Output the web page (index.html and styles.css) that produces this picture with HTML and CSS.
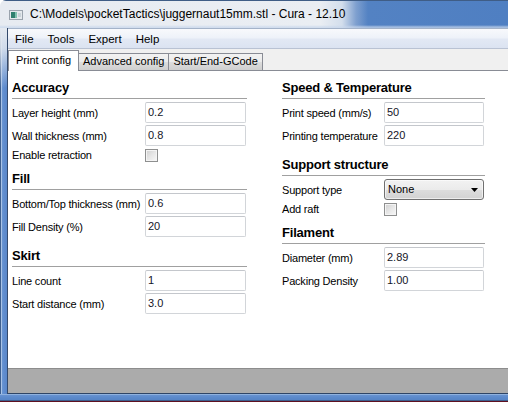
FILE: index.html
```html
<!DOCTYPE html>
<html>
<head>
<meta charset="utf-8">
<title>Cura</title>
<link rel="stylesheet" href="styles.css">
</head>
<body>
<div class="window">
  <div class="titlebar">
    <svg class="appicon" width="14" height="10" viewBox="0 0 14 10">
      <rect x="0.5" y="0.5" width="13" height="9" fill="#e4e8ec" stroke="#9aa3ad"/>
      <rect x="2" y="2" width="4" height="6" fill="#2f7f6e"/>
      <rect x="6" y="2" width="2" height="6" fill="#7fc0ad"/>
      <rect x="9" y="3" width="3" height="4" fill="#c9d2d8"/>
    </svg>
    <span class="title">C:\Models\pocketTactics\juggernaut15mm.stl - Cura - 12.10</span>
  </div>
  <div class="middle">
    <div class="lframe"></div>
    <div class="client">
      <div class="menubar">
        <span class="menu">File</span>
        <span class="menu">Tools</span>
        <span class="menu">Expert</span>
        <span class="menu">Help</span>
      </div>
      <div class="tabs">
        <div class="tab active">Print config</div>
        <div class="tab">Advanced config</div>
        <div class="tab">Start/End-GCode</div>
      </div>
      <div class="panel">
        <div class="col left">
          <div class="heading">Accuracy</div>
          <div class="row"><span class="label">Layer height (mm)</span><span class="input">0.2</span></div>
          <div class="row"><span class="label">Wall thickness (mm)</span><span class="input">0.8</span></div>
          <div class="row check"><span class="label">Enable retraction</span><span class="checkbox"></span></div>

          <div class="heading">Fill</div>
          <div class="row"><span class="label">Bottom/Top thickness (mm)</span><span class="input">0.6</span></div>
          <div class="row"><span class="label">Fill Density (%)</span><span class="input">20</span></div>

          <div class="heading">Skirt</div>
          <div class="row"><span class="label">Line count</span><span class="input">1</span></div>
          <div class="row"><span class="label">Start distance (mm)</span><span class="input">3.0</span></div>
        </div>
        <div class="col right">
          <div class="heading">Speed &amp; Temperature</div>
          <div class="row"><span class="label">Print speed (mm/s)</span><span class="input">50</span></div>
          <div class="row"><span class="label">Printing temperature</span><span class="input">220</span></div>

          <div class="heading">Support structure</div>
          <div class="row"><span class="label">Support type</span>
            <span class="select"><span>None</span>
              <svg class="arrow" width="7" height="4" viewBox="0 0 7 4"><path d="M0 0H7L3.5 4Z" fill="#000"/></svg>
            </span>
          </div>
          <div class="row check"><span class="label">Add raft</span><span class="checkbox"></span></div>

          <div class="heading">Filament</div>
          <div class="row"><span class="label">Diameter (mm)</span><span class="input">2.89</span></div>
          <div class="row"><span class="label">Packing Density</span><span class="input">1.00</span></div>
        </div>
      </div>
      <div class="status"></div>
    </div>
  </div>
  <div class="bframe"></div>
  <div class="desk"></div>
</div>
</body>
</html>
```

FILE: styles.css
```css
* { box-sizing: border-box; }
html, body { margin: 0; padding: 0; background: #ffffff; }
body {
  font-family: "Liberation Sans", Arial, sans-serif;
  font-size: 11px;
  color: #000;
}
.window {
  width: 508px;
  height: 402px;
  display: flex;
  flex-direction: column;
  overflow: hidden;
  border-top-left-radius: 6px;
}
.titlebar {
  height: 28px;
  flex: none;
  display: flex;
  align-items: center;
  padding-left: 9px;
  border-top: 1px solid #3f5d86;
  background:
    linear-gradient(180deg, rgba(255,255,255,0) 0, rgba(255,255,255,0) 24px, rgba(200,215,236,0.7) 26px, rgba(200,215,236,0.7) 27px),
    linear-gradient(90deg, #e7ebf1 0, #eaeef3 320px, #d3deec 342px, #7fa0cf 356px, #5382c3 368px, #4f7fc2 100%);
}
.appicon { flex: none; }
.title {
  margin-left: 7px;
  font-size: 12px;
  line-height: 15px;
  color: #000;
  white-space: nowrap;
}
.middle {
  flex: 1;
  display: flex;
  min-height: 0;
}
.lframe {
  width: 7px;
  flex: none;
  background:
    linear-gradient(180deg, rgba(228,233,240,1) 0, rgba(228,233,240,0.85) 20px, rgba(228,233,240,0) 60px),
    linear-gradient(90deg, #3d5f8f 0, #3d5f8f 1px, #a9c3e6 1px, #a9c3e6 2px, #6b97d3 2px, #5f8cce 4px, #5987ca 7px);
}
.client {
  flex: 1;
  display: flex;
  flex-direction: column;
  border-left: 1px solid #33496b;
  border-bottom: 1px solid #2f4566;
  min-width: 0;
}
.menubar {
  height: 21px;
  flex: none;
  display: flex;
  border-top: 1px solid #a4b3c9;
  border-bottom: 1px solid #b9c2d3;
  background: linear-gradient(180deg, #f8f9fc 0, #eef2f9 45%, #e2e8f4 55%, #dbe3f1 100%);
  padding-top: 2px;
}
.menu {
  padding: 0 7px;
  font-size: 11.5px;
  line-height: 16px;
}
.tabs {
  height: 22px;
  flex: none;
  display: flex;
  align-items: flex-end;
  background: #f0f0f0;
  border-bottom: 1px solid #898c95;
}
.tab {
  height: 17px;
  padding: 0 4px;
  margin-left: -1px;
  border: 1px solid #898c95;
  border-bottom: none;
  background: linear-gradient(180deg, #f2f2f2 0, #ebebeb 50%, #dddddd 51%, #cfcfcf 100%);
  line-height: 15px;
  white-space: nowrap;
}
.tab.active {
  position: relative;
  z-index: 1;
  height: 21px;
  margin-left: 0;
  margin-bottom: -1px;
  padding: 0 7px;
  background: #ffffff;
  line-height: 18px;
}
.panel {
  flex: 1;
  background: #ffffff;
  display: flex;
  padding-left: 4px;
  min-height: 0;
}
.col { flex: none; display: flex; flex-direction: column; }
.col.left { width: 235px; }
.col.right { width: 203px; margin-left: 35px; }
.heading {
  margin-top: 9px;
  margin-bottom: 3px;
  height: 19px;
  padding-bottom: 2px;
  line-height: 16px;
  font-size: 13px;
  font-weight: bold;
  letter-spacing: -0.2px;
  border-bottom: 1px solid #a0a0a0;
  white-space: nowrap;
}
.row {
  height: 21px;
  margin-bottom: 2px;
  display: flex;
  align-items: center;
}
.row.check { height: 14px; margin-bottom: 0; align-items: flex-start; }
.label {
  flex: none;
  white-space: nowrap;
  letter-spacing: -0.2px;
  padding-top: 1px;
}
.left .label { width: 133px; }
.right .label { width: 102px; }
.row.check .label { padding-top: 0; line-height: 14px; }
.input {
  width: 101px;
  height: 21px;
  flex: none;
  border: 1px solid #d2d5d9;
  border-top-color: #c4c7cc;
  border-radius: 2px;
  padding-left: 2px;
  line-height: 19px;
  color: #141428;
  background: #fff;
}
.right .input { width: 100px; }
.checkbox {
  flex: none;
  width: 13px;
  height: 13px;
  margin-top: 1px;
  border: 1px solid #8e8f8f;
  background: linear-gradient(135deg, #cfcfcf 0, #e6e6e6 50%, #f8f8f8 100%);
  box-shadow: inset 0 0 0 1px #f4f4f4;
}
.select {
  flex: none;
  width: 100px;
  height: 21px;
  display: flex;
  align-items: center;
  justify-content: space-between;
  padding: 0 5px 0 3px;
  border: 1px solid #707070;
  border-radius: 3px;
  background: linear-gradient(180deg, #f2f2f2 0, #ebebeb 50%, #dddddd 51%, #d2d2d2 100%);
  box-shadow: inset 0 0 0 1px rgba(255,255,255,0.6);
  line-height: 19px;
}
.arrow { flex: none; }
.status {
  height: 25px;
  flex: none;
  border-top: 1px solid #8d8d8d;
  background: #ababab;
}
.bframe {
  height: 7px;
  flex: none;
  background: linear-gradient(180deg, #8fb1de 0, #8fb1de 1px, #6792d0 1px, #5a88ca 4px, #5684c6 6px, #3e5f8d 6px);
}
.desk {
  height: 1px;
  flex: none;
  background: #5e1020;
}
```
